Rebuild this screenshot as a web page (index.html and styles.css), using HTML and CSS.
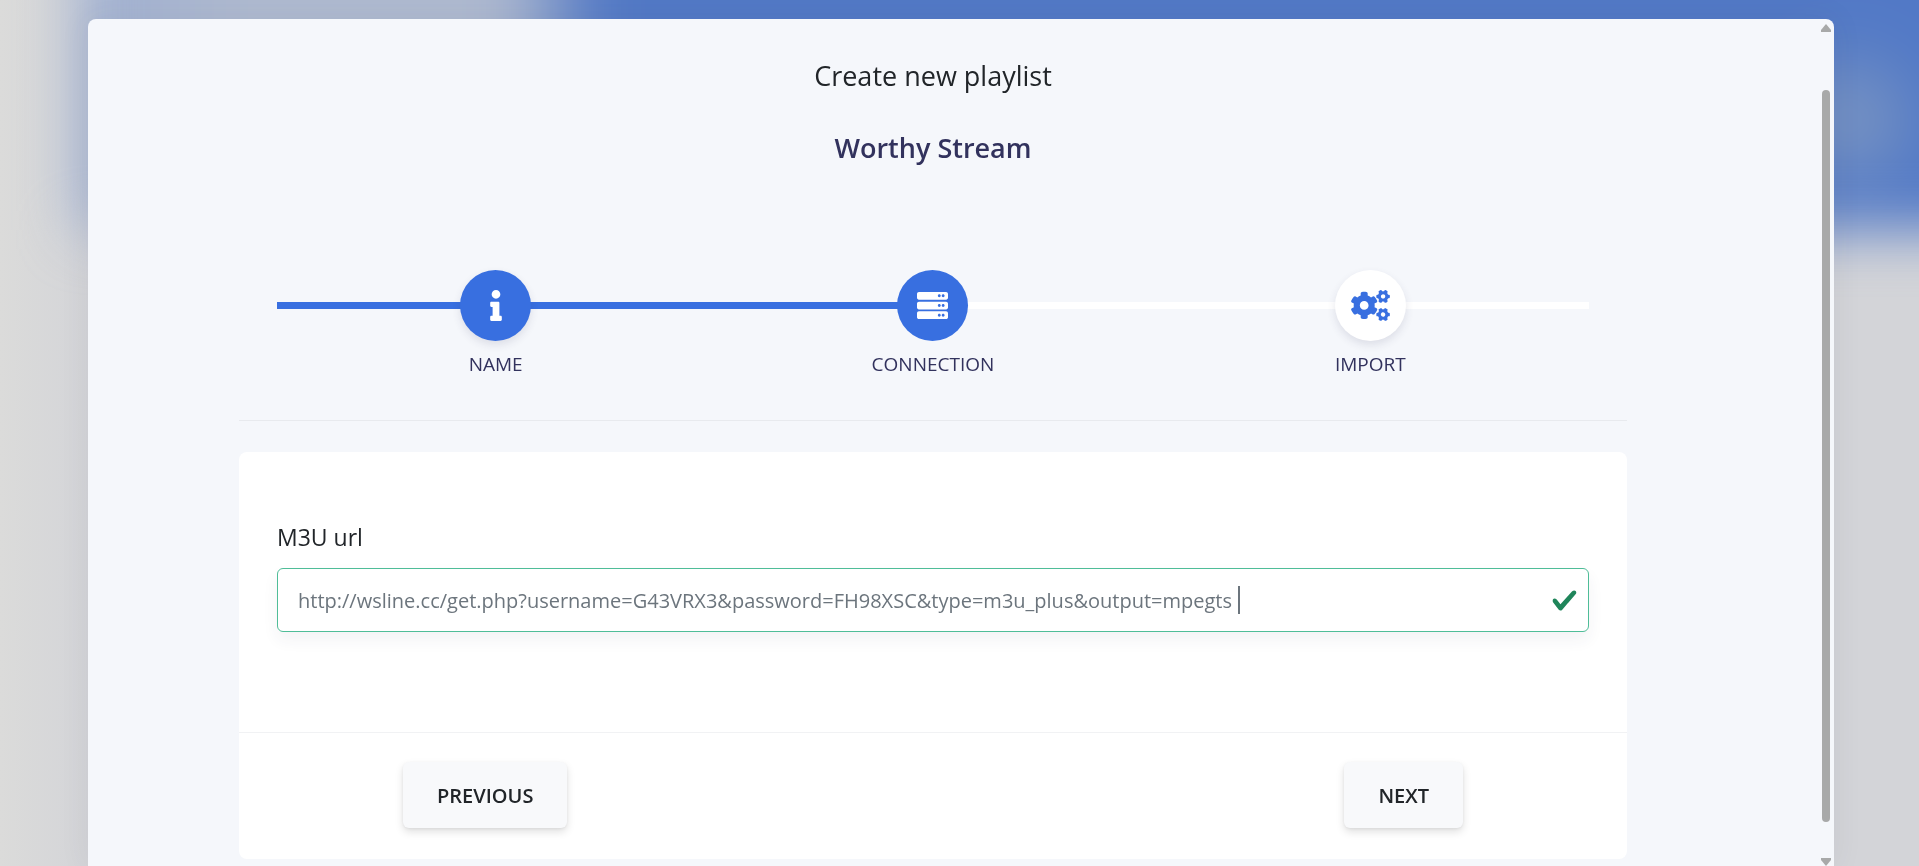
FILE: index.html
```html
<!DOCTYPE html>
<html lang="en">
<head>
    <meta charset="UTF-8">
    <meta name="viewport" content="width=device-width, initial-scale=1.0">
    <title>Create new playlist</title>
    <link rel="stylesheet" href="styles.css">
</head>
<body>
    <div class="backdrop"></div>

    <div class="modal">
        <main class="modal-content">
            <h1>Create new playlist</h1>
            <h2>Worthy Stream</h2>

            <ol class="steps">
                <li class="step done">
                    <span class="step-icon">
                        <svg width="12" height="31" viewBox="0 0 192 512" fill="currentColor"><path d="M20 424.229h20V279.771H20c-11.046 0-20-8.954-20-20V212c0-11.046 8.954-20 20-20h112c11.046 0 20 8.954 20 20v212.229h20c11.046 0 20 8.954 20 20V492c0 11.046-8.954 20-20 20H20c-11.046 0-20-8.954-20-20v-47.771c0-11.046 8.954-20 20-20zM96 0C56.235 0 24 32.235 24 72s32.235 72 72 72 72-32.235 72-72S135.764 0 96 0z"/></svg>
                    </span>
                    <span class="step-name">NAME</span>
                </li>
                <li class="step current">
                    <span class="step-icon">
                        <svg width="31" height="31" viewBox="0 0 512 512" fill="currentColor">
                            <defs><path id="rack" d="M480 160H32c-17.673 0-32-14.327-32-32V64c0-17.673 14.327-32 32-32h448c17.673 0 32 14.327 32 32v64c0 17.673-14.327 32-32 32zm-48-88c-13.255 0-24 10.745-24 24s10.745 24 24 24 24-10.745 24-24-10.745-24-24-24zm-64 0c-13.255 0-24 10.745-24 24s10.745 24 24 24 24-10.745 24-24-10.745-24-24-24z"/></defs>
                            <use href="#rack"/>
                            <use href="#rack" y="160"/>
                            <use href="#rack" y="320"/>
                        </svg>
                    </span>
                    <span class="step-name">CONNECTION</span>
                </li>
                <li class="step">
                    <span class="step-icon">
                        <svg width="39" height="31" viewBox="0 0 640 512" fill="currentColor">
                            <defs><path id="cog" d="M512.1 191l-8.2 14.3c-3 5.3-9.4 7.5-15.1 5.4-11.8-4.4-22.6-10.7-32.1-18.6-4.6-3.8-5.8-10.5-2.8-15.7l8.2-14.3c-6.9-8-12.3-17.3-15.9-27.4h-16.5c-6 0-11.2-4.3-12.2-10.3-2-12-2.1-24.6 0-37.1 1-6 6.2-10.4 12.2-10.4h16.5c3.6-10.1 9-19.4 15.9-27.4l-8.2-14.3c-3-5.2-1.9-11.9 2.8-15.7 9.5-7.9 20.4-14.2 32.1-18.6 5.7-2.1 12.1.1 15.1 5.4l8.2 14.3c10.5-1.9 21.2-1.9 31.7 0L552 6.3c3-5.3 9.4-7.5 15.1-5.4 11.8 4.4 22.6 10.7 32.1 18.6 4.6 3.8 5.8 10.5 2.8 15.7l-8.2 14.3c6.9 8 12.3 17.3 15.9 27.4h16.5c6 0 11.2 4.3 12.2 10.3 2 12 2.1 24.6 0 37.1-1 6-6.2 10.4-12.2 10.4h-16.5c-3.6 10.1-9 19.4-15.9 27.4l8.2 14.3c3 5.2 1.9 11.9-2.8 15.7-9.5 7.9-20.4 14.2-32.1 18.6-5.7 2.1-12.1-.1-15.1-5.4l-8.2-14.3c-10.4 1.9-21.2 1.9-31.7 0zm-10.5-58.8c38.5 29.6 82.4-14.3 52.8-52.8-38.5-29.7-82.4 14.3-52.8 52.8z"/></defs>
                            <use href="#cog"/>
                            <use href="#cog" y="299"/>
                            <path d="M386.3 286.1l33.7 16.8c10.1 5.8 14.5 18.1 10.5 29.1-8.9 24.2-26.4 46.4-42.6 65.8-7.4 8.9-20.2 11.1-30.3 5.3l-29.1-16.8c-16 13.7-34.6 24.6-54.9 31.7v33.6c0 11.6-8.3 21.6-19.7 23.6-24.6 4.2-50.4 4.4-75.9 0-11.5-2-20-11.9-20-23.6V418c-20.3-7.2-38.9-18-54.9-31.7L74 403c-10 5.8-22.9 3.6-30.3-5.3-16.2-19.4-33.3-41.6-42.2-65.7-4-10.9.4-23.2 10.5-29.1l33.3-16.8c-3.9-20.9-3.9-42.4 0-63.4L12 205.8c-10.1-5.8-14.6-18.1-10.5-29 8.9-24.2 26-46.4 42.2-65.8 7.4-8.9 20.2-11.1 30.3-5.3l29.1 16.8c16-13.7 34.6-24.6 54.9-31.7V57.1c0-11.5 8.2-21.5 19.6-23.5 24.6-4.2 50.5-4.4 76-.1 11.5 2 20 11.9 20 23.6v33.6c20.3 7.2 38.9 18 54.9 31.7l29.1-16.8c10-5.8 22.9-3.6 30.3 5.3 16.2 19.4 33.2 41.6 42.1 65.8 4 10.9.1 23.2-10 29.1l-33.7 16.8c3.9 21 3.9 42.5 0 63.5zm-117.6 21.1c59.2-77-28.7-164.9-105.7-105.7-59.2 77 28.7 164.9 105.7 105.7z"/>
                        </svg>
                    </span>
                    <span class="step-name">IMPORT</span>
                </li>
            </ol>

            <hr>

            <form class="card">
                <div class="card-body">
                    <label for="url">M3U url</label>
                    <div class="field">
                        <input id="url" type="text" value="http://wsline.cc/get.php?username=G43VRX3&amp;password=FH98XSC&amp;type=m3u_plus&amp;output=mpegts" spellcheck="false">
                        <span class="caret"></span>
                        <svg class="check" width="27" height="27" viewBox="0 0 8 8" fill="currentColor"><path d="M2.3 6.73.6 4.53c-.4-1.04.46-1.4 1.1-.8l1.1 1.4 3.4-3.8c.6-.63 1.6-.27 1.2.7l-4 4.6c-.43.5-.8.4-1.1.1z"/></svg>
                    </div>
                </div>
                <div class="card-footer">
                    <button type="button">PREVIOUS</button>
                    <button type="button">NEXT</button>
                </div>
            </form>
        </main>

        <div class="scrollbar">
            <svg width="10" height="8" viewBox="0 0 10 8" fill="currentColor"><path d="M5 0 10 6V8H0V6z"/></svg>
            <div class="thumb"></div>
            <svg width="10" height="8" viewBox="0 0 10 8" fill="currentColor"><path d="M0 0H10V2L5 8 0 2z"/></svg>
        </div>
    </div>
</body>
</html>
```
FILE: styles.css
```css
* {
    box-sizing: border-box;
}
body {
    margin: 0;
    height: 100vh;
    overflow: hidden;
    font-family: "Open Sans", sans-serif;
    font-size: 20px;
    color: #212529;
    background: linear-gradient(90deg, #dbdbda, #d3d4d8 5%, #d3d4d8);
}
/* blurred page header behind the modal */
.backdrop {
    position: fixed;
    top: -100px;
    left: 78px;
    right: -100px;
    height: 330px;
    background:
        radial-gradient(circle at 1770px 220px, rgba(160, 175, 190, 0.6), transparent 90px),
        linear-gradient(90deg, #9fb0d2, #afbad0 8%, #afbad0 22%, #5279c6 27%, #5279c6);
    filter: blur(28px);
}
.modal {
    position: relative;
    display: flex;
    height: calc(100vh - 19px);
    margin: 19px 85px 0 88px;
    background-color: #f5f7fb;
    border-radius: 8px 8px 0 0;
    box-shadow: 0 0 30px rgba(60, 70, 90, 0.08);
    overflow: hidden;
}
.modal-content {
    flex: 1;
    padding: 37px 194px 0 151px;
}
h1, h2 {
    margin: 0;
    text-align: center;
    font-size: 27px;
    line-height: 40px;
    font-weight: 400;
}
h2 {
    margin-top: 32px;
    font-weight: 600;
    color: #32325d;
}
.steps {
    display: flex;
    list-style: none;
    margin: 102px 38px 0;
    padding: 0;
}
.step {
    flex: 1;
    display: flex;
    flex-direction: column;
    align-items: center;
    gap: 8px;
    color: #32325d;
    background: linear-gradient(#fff, #fff) 0 32px / 100% 7px no-repeat;
}
.step.done {
    background-image: linear-gradient(#386fe0, #386fe0);
}
.step.current {
    background-image: linear-gradient(90deg, #386fe0 50%, #fff 50%);
}
.step-icon {
    display: flex;
    align-items: center;
    justify-content: center;
    width: 71px;
    height: 71px;
    border-radius: 50%;
    background-color: #fff;
    color: #386fe0;
    box-shadow: 0 4px 8px rgba(50, 50, 93, 0.12);
}
.done .step-icon, .current .step-icon {
    background-color: #386fe0;
    color: #fff;
}
.current .step-icon {
    box-shadow: none;
}
.step-name {
    font-size: 19px;
    line-height: 30px;
}
hr {
    margin: 41px 0 31px;
    border: none;
    border-top: 1px solid #e8eaee;
}
.card {
    background-color: #fff;
    border-radius: 8px;
}
.card-body {
    padding: 68px 38px 100px;
}
label {
    display: block;
    margin-bottom: 14px;
    font-size: 23px;
    line-height: 34px;
}
.field {
    display: flex;
    align-items: center;
    height: 64px;
    padding: 0 10px 0 20px;
    border: 1px solid #4fbd98;
    border-radius: 6px;
    background-color: #fff;
    box-shadow: 0 8px 16px rgba(50, 50, 93, 0.06);
}
input {
    field-sizing: content;
    min-width: 0;
    padding: 0;
    border: none;
    outline: none;
    background: none;
    font: inherit;
    color: #6c757d;
}
.caret {
    width: 2px;
    height: 28px;
    margin-left: 6px;
    background-color: #6c757d;
}
.check {
    margin-left: auto;
    color: #1f855a;
}
.card-footer {
    display: flex;
    justify-content: space-between;
    padding: 29px 164px 31px;
    border-top: 1px solid #f1f2f4;
}
button {
    height: 66px;
    padding: 0 34px;
    border: none;
    border-radius: 6px;
    background-color: #f8f9fb;
    box-shadow: 0 4px 8px rgba(0, 0, 0, 0.12), 0 1px 3px rgba(0, 0, 0, 0.06);
    font: inherit;
    font-weight: 600;
    color: #212529;
    cursor: pointer;
}
.scrollbar {
    display: flex;
    flex-direction: column;
    align-items: center;
    width: 10px;
    margin-right: 3px;
    padding-top: 5px;
    color: #a8a9a9;
}
.thumb {
    flex: 1;
    width: 8px;
    margin: 58px 0 36px;
    border-radius: 4px;
    background-color: #a8a9a9;
}
```
